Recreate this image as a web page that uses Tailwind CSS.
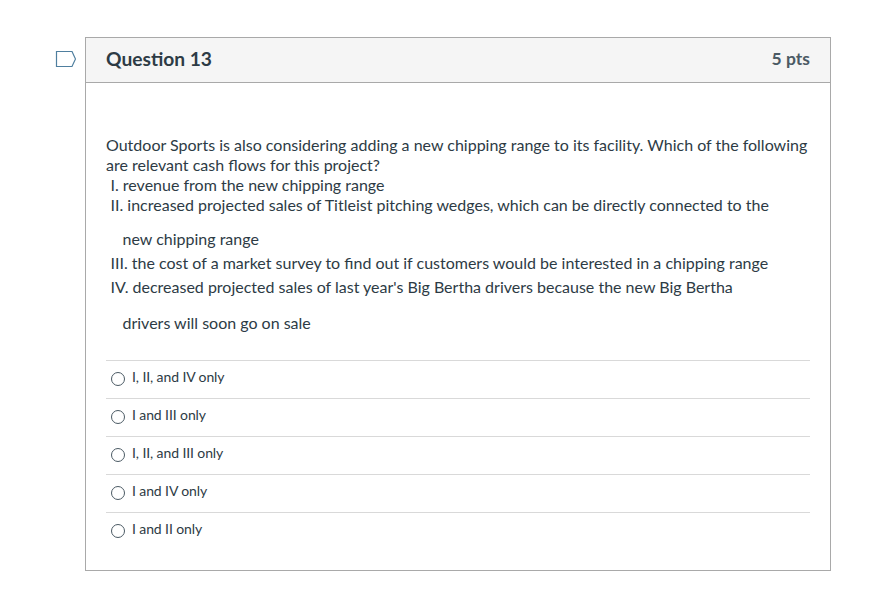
<!DOCTYPE html>
<html lang="en">
<head>
<meta charset="UTF-8">
<title>Question 13</title>
<script src="https://cdn.jsdelivr.net/npm/@tailwindcss/browser@4"></script>
</head>
<body class="bg-white font-['Lato','Liberation_Sans',sans-serif] text-[#2d3b45]">
<div class="w-[880px] h-[589px] overflow-hidden pt-[37px] pl-[55px] flex items-start">
  <svg class="w-[21px] h-[17px] mt-[14px] mr-[9px] shrink-0" viewBox="0 0 21 17" fill="none">
    <path d="M1.5 .5h15.5l3.5 7.5-3.5 7.5H1.5z" stroke="#4f7f9f" stroke-width="1.2"/>
  </svg>
  <div class="w-[746px] h-[534px] border border-[#a9a9a9]">
    <div class="h-[45px] bg-[#f5f5f5] border-b border-[#a9a9a9] px-5 pb-[2px] flex items-center justify-between">
      <h2 class="text-[19.2px] font-bold">Question 13</h2>
      <span class="text-[17.5px] font-bold text-[#4b5a64]">5 pts</span>
    </div>
    <div class="px-5 pt-[52px]">
      <div class="text-[16px] leading-[20px]">
        <p>Outdoor Sports is also considering adding a new chipping range to its facility. Which of the following are relevant cash flows for this project?</p>
        <p class="pl-[4.5px]">I. revenue from the new chipping range</p>
        <p class="pl-[4.5px]">II. increased projected sales of Titleist pitching wedges, which can be directly connected to the</p>
        <p class="pl-[16.5px] mt-[14px]">new chipping range</p>
        <p class="pl-[4.5px] mt-[4px]">III. the cost of a market survey to find out if customers would be interested in a chipping range</p>
        <p class="pl-[4.5px] mt-[4px]">IV. decreased projected sales of last year's Big Bertha drivers because the new Big Bertha</p>
        <p class="pl-[16.5px] mt-[16px]">drivers will soon go on sale</p>
      </div>
      <div class="mt-[27px] text-[14px]">
        <div class="h-[38px] border-t border-[#d9d9d9] flex items-center gap-[7px] pl-[5px] pb-[2px]"><span class="w-[14px] h-[14px] rounded-full border border-[#4b5a64]"></span><span class="-translate-y-[2px] tracking-[-0.1px]">I, II, and IV only</span></div>
        <div class="h-[38px] border-t border-[#d9d9d9] flex items-center gap-[7px] pl-[5px] pb-[2px]"><span class="w-[14px] h-[14px] rounded-full border border-[#4b5a64]"></span><span class="-translate-y-[2px] tracking-[-0.1px]">I and III only</span></div>
        <div class="h-[38px] border-t border-[#d9d9d9] flex items-center gap-[7px] pl-[5px] pb-[2px]"><span class="w-[14px] h-[14px] rounded-full border border-[#4b5a64]"></span><span class="-translate-y-[2px] tracking-[-0.1px]">I, II, and III only</span></div>
        <div class="h-[38px] border-t border-[#d9d9d9] flex items-center gap-[7px] pl-[5px] pb-[2px]"><span class="w-[14px] h-[14px] rounded-full border border-[#4b5a64]"></span><span class="-translate-y-[2px] tracking-[-0.1px]">I and IV only</span></div>
        <div class="h-[38px] border-t border-[#d9d9d9] flex items-center gap-[7px] pl-[5px] pb-[2px]"><span class="w-[14px] h-[14px] rounded-full border border-[#4b5a64]"></span><span class="-translate-y-[2px] tracking-[-0.1px]">I and II only</span></div>
      </div>
    </div>
  </div>
</div>
</body>
</html>
